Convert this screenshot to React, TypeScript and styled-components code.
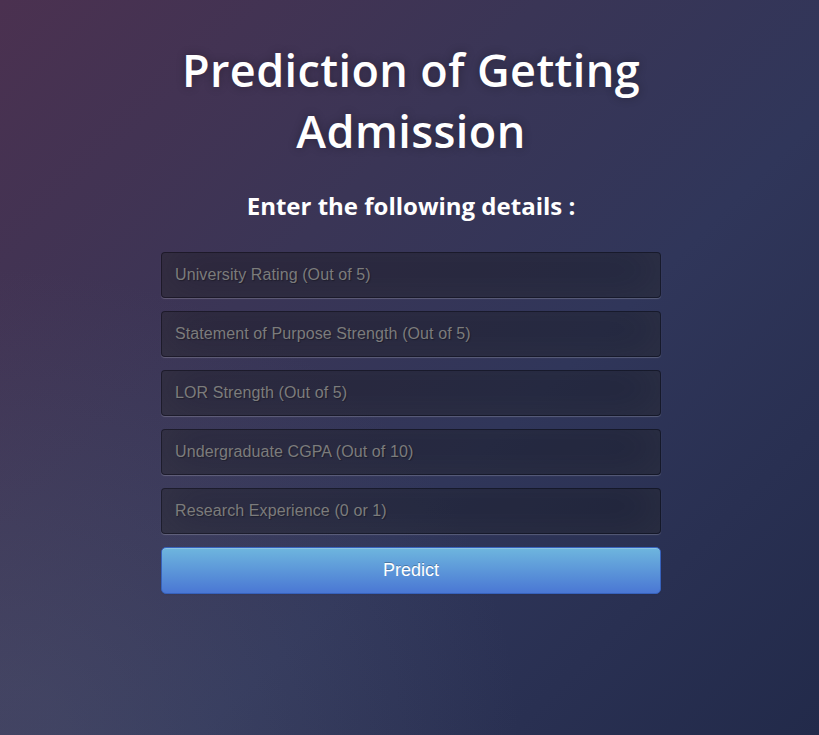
import React from "react";
import styled, { createGlobalStyle } from "styled-components";

const GlobalStyle = createGlobalStyle`
  html, body {
    margin: 0;
    padding: 0;
    height: 100%;
  }
  body {
    font-family: "Open Sans", sans-serif;
    color: #fff;
    background: #2c2f4f;
    background:
      radial-gradient(ellipse at 0% 100%, rgba(104,110,130,.25) 5%, rgba(104,110,130,0) 45%),
      linear-gradient(135deg, #4b3150 0%, #3a3556 35%, #30365a 60%, #222a4a 100%);
    background-attachment: fixed;
  }
`;

const Page = styled.div`
  min-height: 100vh;
  display: flex;
  justify-content: center;
  padding-left: 3px;
  box-sizing: border-box;
  text-align: center;
`;

const Panel = styled.div`
  width: 500px;
  padding-top: 39px;
  display: flex;
  flex-direction: column;
`;

const Title = styled.h1`
  margin: 0;
  font-size: 45px;
  font-weight: 600;
  line-height: 61px;
  letter-spacing: 0.4px;
  text-shadow: 0 0 10px rgba(0, 0, 0, 0.3);
`;

const Subtitle = styled.h2`
  margin: 28px 0 30px;
  font-size: 24px;
  font-weight: 700;
  line-height: 33px;
  letter-spacing: 0;
`;

const Form = styled.form`
  display: flex;
  flex-direction: column;
  gap: 13px;
`;

const Field = styled.input`
  box-sizing: border-box;
  width: 100%;
  height: 46px;
  margin: 0;
  padding: 0 13px;
  font-family: "Liberation Sans", Arial, sans-serif;
  font-size: 16px;
  letter-spacing: 0.1px;
  color: #fff;
  background: rgba(0, 0, 0, 0.3);
  border: 1px solid rgba(0, 0, 0, 0.3);
  border-radius: 4px;
  outline: none;
  text-shadow: 1px 1px 1px rgba(0, 0, 0, 0.3);
  box-shadow: inset 0 -5px 45px rgba(100, 100, 100, 0.2), 0 1px 1px rgba(255, 255, 255, 0.2);

  &::placeholder {
    color: #7c7c7c;
  }
`;

const Button = styled.button`
  box-sizing: border-box;
  width: 100%;
  height: 47px;
  font-family: "Liberation Sans", Arial, sans-serif;
  font-size: 18px;
  letter-spacing: 0;
  color: #fff;
  text-shadow: 0 -1px 0 rgba(0, 0, 0, 0.25);
  background-color: #4a77d4;
  background-image: linear-gradient(to bottom, #6eb6de, #4a77d4);
  border: 1px solid #3762bc;
  border-radius: 5px;
  box-shadow: inset 0 1px 0 rgba(255, 255, 255, 0.2), 0 1px 2px rgba(0, 0, 0, 0.05);
  cursor: pointer;
`;

const fields = [
  "University Rating (Out of 5)",
  "Statement of Purpose Strength (Out of 5)",
  "LOR Strength (Out of 5)",
  "Undergraduate CGPA (Out of 10)",
  "Research Experience (0 or 1)",
];

export default function App() {
  return (
    <>
      <GlobalStyle />
      <Page>
        <Panel>
          <Title>Prediction of Getting Admission</Title>
          <Subtitle>Enter the following details :</Subtitle>
          <Form onSubmit={(e) => e.preventDefault()}>
            {fields.map((f) => (
              <Field key={f} type="text" placeholder={f} />
            ))}
            <Button type="submit">Predict</Button>
          </Form>
        </Panel>
      </Page>
    </>
  );
}
